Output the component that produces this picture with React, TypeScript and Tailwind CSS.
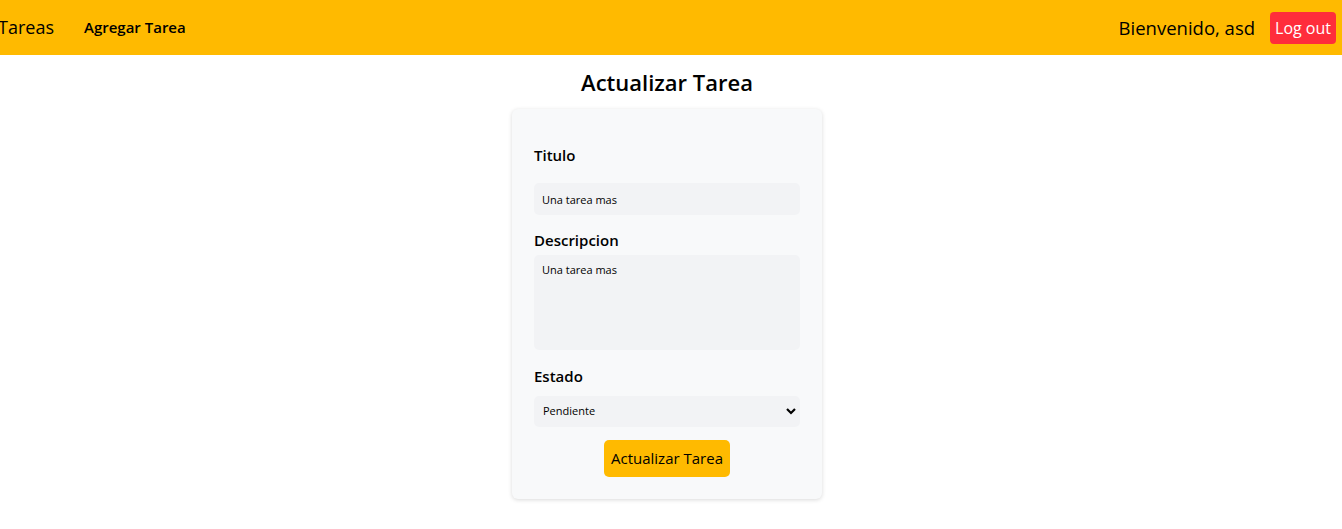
export default function App() {
  return (
    <div className="min-h-screen bg-white font-['Open_Sans','Noto_Sans',sans-serif] text-black">
      {/* Navbar */}
      <nav className="h-[55px] bg-[#ffba00] flex items-center justify-between pr-[6px]">
        <div className="flex items-center">
          <span className="text-[18px] -ml-[2px]">Tareas</span>
          <span className="ml-[30px] text-[15px] font-semibold">Agregar Tarea</span>
        </div>
        <div className="flex items-center">
          <span className="text-[18.5px]">Bienvenido, asd</span>
          <button className="ml-[15px] h-[32px] px-[5px] rounded-[4px] bg-[#ff2d3b] text-white text-[16px]">
            Log out
          </button>
        </div>
      </nav>

      {/* Form */}
      <div className="flex flex-col items-center pr-[8px]">
        <h1 className="mt-[11px] text-[22px] font-semibold leading-[32px]">Actualizar Tarea</h1>
        <div className="mt-[11px] w-[310px] bg-[#f8f9fa] rounded-[6px] shadow-[0_1px_4px_rgba(0,0,0,0.15)] px-[22px] pt-[35px] pb-[22px]">
          <label className="block text-[15px] font-semibold leading-[22px]">Titulo</label>
          <input
            className="mt-[17px] w-full h-[32px] rounded-[5px] bg-[#f2f3f5] px-[8px] text-[11px] outline-none"
            defaultValue="Una tarea mas"
          />
          <label className="block mt-[14px] text-[15px] font-semibold leading-[22px]">Descripcion</label>
          <textarea
            className="mt-[4px] block w-full h-[95px] rounded-[5px] bg-[#f2f3f5] px-[8px] py-[7px] text-[11px] outline-none resize-none"
            defaultValue="Una tarea mas"
          />
          <label className="block mt-[15px] text-[15px] font-semibold leading-[22px]">Estado</label>
          <div className="relative mt-[9px]">
            <select className="w-full h-[31px] appearance-none rounded-[5px] bg-[#f2f3f5] px-[9px] text-[11px] outline-none">
              <option>Pendiente</option>
            </select>
            <svg
              className="absolute right-[3px] top-[10px] pointer-events-none"
              width="12"
              height="10"
              viewBox="0 0 12 10"
            >
              <path d="M2 3 L6 7 L10 3" fill="none" stroke="black" strokeWidth="2.2" />
            </svg>
          </div>
          <div className="flex justify-center mt-[13px]">
            <button className="h-[37px] px-[7px] rounded-[5px] bg-[#ffba00] text-[15px]">
              Actualizar Tarea
            </button>
          </div>
        </div>
      </div>
    </div>
  );
}
